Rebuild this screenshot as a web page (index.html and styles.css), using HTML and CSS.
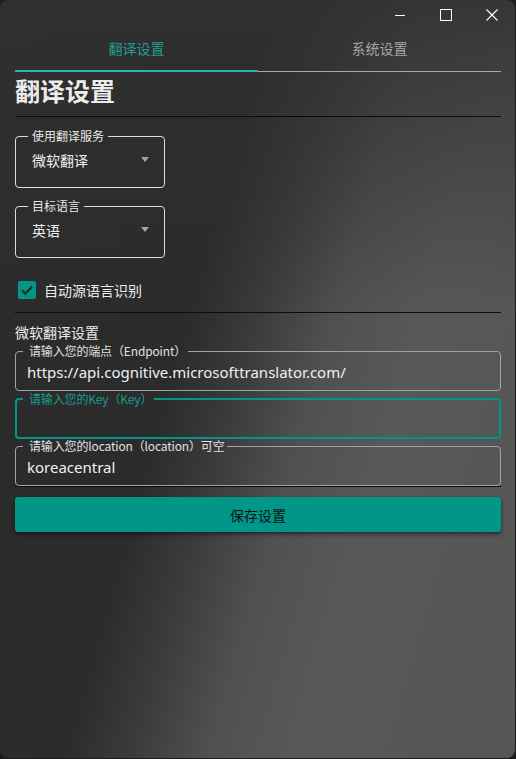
FILE: index.html
```html
<!DOCTYPE html>
<html lang="zh">
<head>
<meta charset="utf-8">
<title>翻译设置</title>
<link rel="stylesheet" href="styles.css">
</head>
<body>
<div class="window">
  <div class="titlebar">
    <div class="tb-btn">
      <svg width="12" height="12" viewBox="0 0 12 12"><path d="M1 6.5H11" stroke="#fff" stroke-width="1"/></svg>
    </div>
    <div class="tb-btn">
      <svg width="12" height="12" viewBox="0 0 12 12"><rect x="0.5" y="0.5" width="11" height="11" fill="none" stroke="#fff" stroke-width="1"/></svg>
    </div>
    <div class="tb-btn">
      <svg width="12" height="12" viewBox="0 0 12 12"><path d="M0.5 0.5L11.5 11.5M11.5 0.5L0.5 11.5" stroke="#fff" stroke-width="1.1"/></svg>
    </div>
  </div>
  <div class="content">
    <div class="tabs">
      <div class="tab active">翻译设置</div>
      <div class="tab">系统设置</div>
    </div>
    <h1 class="heading">翻译设置</h1>
    <div class="rule rule-top"></div>

    <fieldset class="select">
      <legend>使用翻译服务</legend>
      <div class="select-row"><span>微软翻译</span><span class="arrow"></span></div>
    </fieldset>

    <fieldset class="select select-2">
      <legend>目标语言</legend>
      <div class="select-row"><span>英语</span><span class="arrow"></span></div>
    </fieldset>

    <label class="check-row">
      <span class="checkbox">
        <svg width="18" height="18" viewBox="0 0 18 18"><path d="M3.8 9.2L7.3 12.6L14.2 5.6" fill="none" stroke="#1d2a28" stroke-width="2.2"/></svg>
      </span>
      <span>自动源语言识别</span>
    </label>

    <div class="rule rule-mid"></div>
    <div class="section-title">微软翻译设置</div>

    <fieldset class="field">
      <legend>请输入您的端点（Endpoint）</legend>
      <div class="value">https://api.cognitive.microsofttranslator.com/</div>
    </fieldset>

    <fieldset class="field focused">
      <legend>请输入您的Key（Key）</legend>
      <div class="value"></div>
    </fieldset>

    <div class="underlined">
      <fieldset class="field field-3">
        <legend>请输入您的location（location）可空</legend>
        <div class="value">koreacentral</div>
      </fieldset>
    </div>

    <button class="save">保存设置</button>
  </div>
</div>
</body>
</html>
```

FILE: styles.css
```css
html, body {
  margin: 0;
  padding: 0;
  background: #1c1c1e;
}

body {
  width: 516px;
  height: 759px;
  overflow: hidden;
  font-family: "Noto Sans", "Noto Sans CJK SC", sans-serif;
  color: #ececec;
}

.window {
  width: 515px;
  height: 758px;
  border-radius: 8px;
  overflow: hidden;
  display: flex;
  flex-direction: column;
  background:
    linear-gradient(to bottom, rgba(48, 48, 48, 0.85) 0px, rgba(48, 48, 48, 0) 320px),
    linear-gradient(106deg, #2c2c2c 0%, #2b2b2b 38%, #3a3a3a 47%, #505050 58%, #585858 70%, #555555 100%);
}

.titlebar {
  height: 30px;
  display: flex;
  justify-content: flex-end;
  flex: none;
}

.tb-btn {
  width: 46px;
  height: 30px;
  display: flex;
  align-items: center;
  justify-content: center;
}

.tb-btn svg {
  display: block;
}

.content {
  padding: 0 14px 0 15px;
  display: flex;
  flex-direction: column;
}

.tabs {
  display: grid;
  grid-template-columns: 1fr 1fr;
  height: 41px;
  border-bottom: 1px solid #a8a8a8;
}

.tab {
  position: relative;
  text-align: center;
  font-size: 14px;
  line-height: 36px;
  color: #a6a6a6;
  font-family: "Noto Sans CJK SC", sans-serif;
}

.tab.active {
  color: #1f9d8e;
}

.tab.active::after {
  content: "";
  position: absolute;
  left: 0;
  right: 0;
  bottom: -1px;
  height: 2px;
  background: #2fb3a3;
}

.heading {
  margin: 4px 0 0 0;
  font-size: 25px;
  line-height: 28px;
  font-weight: bold;
  color: #ececec;
  font-family: "Noto Sans CJK SC", sans-serif;
}

.rule {
  height: 1px;
  background: #0c0c0c;
}

.rule-top {
  margin-top: 12px;
}

fieldset {
  margin: 0;
  min-width: 0;
  border-radius: 4px;
}

legend {
  font-size: 12px;
  line-height: 14px;
  font-family: "Noto Sans CJK SC", sans-serif;
}

.select {
  width: 150px;
  box-sizing: border-box;
  margin-top: 12px;
  border: 1px solid #dcdcdc;
  padding: 0 15px 17px 12px;
}

.select-2 {
  margin-top: 11px;
}

.select legend {
  padding: 0 4px;
  color: #e8e8e8;
}

.select-row {
  margin: 7px 0 0 4px;
  display: flex;
  align-items: center;
  justify-content: space-between;
  font-size: 14px;
  line-height: 20px;
  font-family: "Noto Sans CJK SC", sans-serif;
  color: #f0f0f0;
}

.arrow {
  width: 0;
  height: 0;
  border-left: 4px solid transparent;
  border-right: 4px solid transparent;
  border-top: 5px solid #a3a3a3;
  margin-bottom: 2px;
}

.check-row {
  margin-top: 23px;
  margin-left: 3px;
  display: flex;
  align-items: center;
  gap: 8px;
  font-size: 14px;
  line-height: 18px;
  font-family: "Noto Sans CJK SC", sans-serif;
  color: #ececec;
}

.checkbox {
  width: 18px;
  height: 18px;
  border-radius: 2px;
  background: #009688;
  display: block;
}

.checkbox svg {
  display: block;
}

.rule-mid {
  margin-top: 13px;
}

.section-title {
  margin-top: 9px;
  font-size: 14px;
  line-height: 20px;
  font-family: "Noto Sans CJK SC", sans-serif;
  color: #ececec;
}

.field {
  border: 1px solid #a2a2a2;
  padding: 0 0 7px 7px;
  margin-top: 2px;
}

.field legend {
  padding: 0 2px 0 6px;
  color: #e0e0e0;
  letter-spacing: -0.15px;
}

.field .value {
  margin: 3px 0 0 4px;
  height: 22px;
  font-size: 15px;
  line-height: 22px;
  color: #f0f0f0;
  white-space: nowrap;
}

.field.focused {
  border: 2px solid #009688;
  padding: 0 0 6px 6px;
  margin-top: 1px;
}

.field.focused legend {
  color: #139e8d;
}

.underlined {
  margin-top: 0;
  border-bottom: 1px solid #0c0c0c;
}

.field-3 {
  margin-top: 0;
}

.save {
  margin-top: 10px;
  height: 35px;
  border: none;
  border-radius: 3px;
  background: #009688;
  color: #111;
  font-size: 14px;
  font-family: "Noto Sans CJK SC", sans-serif;
  box-shadow: 0 2px 4px rgba(0, 0, 0, 0.55);
  padding: 0;
}
```
